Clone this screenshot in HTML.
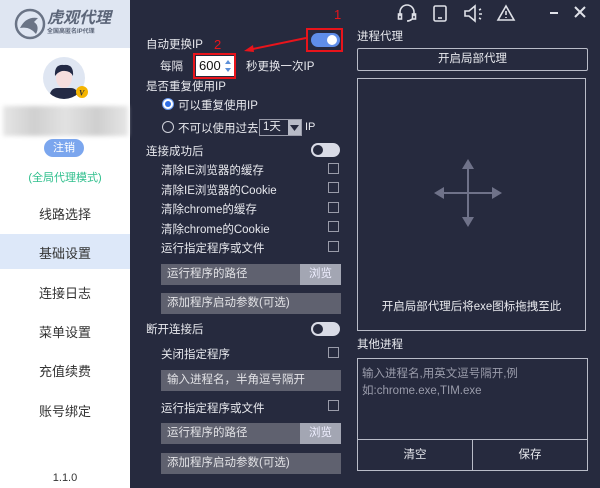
<!DOCTYPE html>
<html><head><meta charset="utf-8"><style>
*{margin:0;padding:0;box-sizing:border-box}
body{width:600px;height:488px;overflow:hidden;background:#262a3e;font-family:"Liberation Sans","Noto Sans CJK SC",sans-serif;font-size:11.5px;color:#e8e9ee;position:relative}
.a{position:absolute;white-space:nowrap}
.side{position:absolute;left:0;top:0;width:130px;height:488px;background:#fff}
.nav{position:absolute;left:0;width:130px;text-align:center;color:#333;font-size:13px}
.cb{position:absolute;left:328px;width:11px;height:11px;border:1px solid #9a9caa}
.bar{position:absolute;left:161px;width:180px;height:21px;background:#5f616f;color:#e2e2e6;padding-left:6px;line-height:21px}
.br{position:absolute;right:0;top:0;width:41px;height:21px;background:#a3a6b3;color:#eef;text-align:center}
.tg{position:absolute;width:29px;height:14px;border-radius:7px;background:#d9dbe6}
.tg i{position:absolute;left:2px;top:2px;width:10px;height:10px;border-radius:50%;background:#262a3e}
.box{position:absolute;border:1px solid #b9bcc8}
.red{position:absolute;border:2px solid #e8141b}
</style></head><body>
<div class="side">
 <div style="position:absolute;left:0;top:0;width:130px;height:48px;background:#dfe6f2"></div>
 <svg class="a" style="left:14px;top:8px" width="32" height="32"><circle cx="16" cy="16" r="14" fill="none" stroke="#6a7486" stroke-width="2.5"/><path d="M6 20 Q12 8 24 10 L20 14 Q26 18 22 26 Q16 18 6 20Z" fill="#6a7486"/></svg>
 <div class="a" style="left:47px;top:9px;font-size:16px;line-height:20px;font-weight:bold;font-style:italic;color:#5c6679">虎观代理</div>
 <div class="a" style="left:47px;top:29px;font-size:6px;line-height:7px;font-weight:bold;color:#5c6679">全国高匿名IP代理</div>
 <svg class="a" style="left:42px;top:56px" width="52" height="50"><defs><clipPath id="c"><circle cx="22" cy="22" r="21"/></clipPath></defs><circle cx="22" cy="22" r="21" fill="#dfe6f2"/><g clip-path="url(#c)"><rect x="8" y="32" width="28" height="14" rx="7" fill="#232a45"/><ellipse cx="22" cy="22" rx="8" ry="10" fill="#f6dede"/><path d="M13 20 Q12 8 22 9 Q32 8 31 20 Q28 14 20 15 Q16 16 13 20Z" fill="#232a45"/></g><circle cx="40" cy="36" r="6" fill="#f4b400"/><text x="37" y="39.5" font-size="8" font-weight="bold" font-style="italic" fill="#333" font-family="Liberation Serif">V</text></svg>
 <div style="position:absolute;left:3px;top:106px;width:125px;height:30px;background:linear-gradient(90deg,#e6e6e6,#d0d0d0,#e2e2e2,#cfcfcf,#e6e6e6);filter:blur(2px)"></div>
 <div class="a" style="left:44px;top:139px;width:40px;height:18px;border-radius:9px;background:#7ba6ee;color:#fff;text-align:center;line-height:18px;font-size:11px">注销</div>
 <div class="a" style="left:0;top:169px;width:130px;text-align:center;color:#2ebf8c;font-size:11px">(全局代理模式)</div>
 <div style="position:absolute;left:0;top:234px;width:130px;height:35px;background:#dde8f9"></div>
 <div class="nav" style="top:204px">线路选择</div>
 <div class="nav" style="top:243px">基础设置</div>
 <div class="nav" style="top:283px">连接日志</div>
 <div class="nav" style="top:322px">菜单设置</div>
 <div class="nav" style="top:361px">充值续费</div>
 <div class="nav" style="top:401px">账号绑定</div>
 <div class="nav" style="top:472px;font-size:11px">1.1.0</div>
</div>
<svg class="a" style="left:395px;top:2px" width="205" height="22" fill="none" stroke="#dfe1e8" stroke-width="1.6">
<path d="M5 14 V10 A7 7 0 0 1 19 10 V14"/><rect x="3.5" y="12" width="3" height="5"/><rect x="17.5" y="12" width="3" height="5"/><path d="M17 17 Q15 19 12 19"/>
<rect x="39" y="4" width="12" height="15" rx="1.5"/><path d="M43 16 H47"/>
<path d="M70 9 H74 L80 4 V19 L74 14 H70Z"/><path d="M84 8 L86 7 M84 12 H87 M84 16 L86 17"/>
<path d="M111 4 L119 18 H103Z"/><path d="M111 9 V13 M111 15 V16"/>
<path d="M155 11 H163" stroke-width="2"/><path d="M180 5 L190 15 M190 5 L180 15" stroke-width="2"/>
</svg>
<div class="a" style="left:146px;top:36px">自动更换IP</div>
<div class="tg" style="left:311px;top:33px;background:#5f8eea"><i style="left:16px;background:#fff"></i></div>
<div class="red" style="left:306px;top:28px;width:37px;height:24px"></div>
<div class="a" style="left:334px;top:7px;color:#e8141b;font-size:13px">1</div>
<div class="a" style="left:214px;top:37px;color:#e8141b;font-size:13px">2</div>
<svg class="a" style="left:240px;top:35px" width="70" height="20"><path d="M66 3 L8 15" stroke="#e8141b" stroke-width="2"/><path d="M4 16 L13 10 L14 17Z" fill="#e8141b"/></svg>
<div class="a" style="left:160px;top:58px">每隔</div>
<div class="a" style="left:196px;top:56px;width:38px;height:20px;background:#fff;color:#111;font-size:13px;line-height:20px;padding-left:3px">600</div>
<svg class="a" style="left:224px;top:58px" width="8" height="16"><path d="M1 6 L4 2 L7 6Z M1 10 L4 14 L7 10Z" fill="#5c8fd8"/></svg>
<div class="red" style="left:193px;top:53px;width:43px;height:26px"></div>
<div class="a" style="left:246px;top:58px">秒更换一次IP</div>
<div class="a" style="left:146px;top:78px">是否重复使用IP</div>
<div class="a" style="left:162px;top:98px;width:12px;height:12px;border-radius:50%;border:1px solid #6a9af0;background:#fff"><div style="margin:2px;width:6px;height:6px;border-radius:50%;background:#2f6fe6"></div></div>
<div class="a" style="left:178px;top:97px">可以重复使用IP</div>
<div class="a" style="left:162px;top:121px;width:12px;height:12px;border-radius:50%;border:1px solid #cfd1da"></div>
<div class="a" style="left:178px;top:120px">不可以使用过去</div>
<div class="a" style="left:259px;top:119px;width:43px;height:17px;border:1px solid #9a9caa;padding-left:3px;line-height:15px">1天<span style="position:absolute;right:0;top:0;width:13px;height:15px;background:#b8bbc7"></span><svg style="position:absolute;right:2px;top:5px" width="9" height="6"><path d="M0 0H9L4.5 6Z" fill="#262a3e"/></svg></div>
<div class="a" style="left:305px;top:121px;font-size:11px">IP</div>
<div class="a" style="left:146px;top:143px">连接成功后</div>
<div class="tg" style="left:311px;top:143px"><i></i></div>
<div class="a" style="left:161px;top:162px">清除IE浏览器的缓存</div><div class="cb" style="top:163px"></div>
<div class="a" style="left:161px;top:182px">清除IE浏览器的Cookie</div><div class="cb" style="top:182px"></div>
<div class="a" style="left:161px;top:201px">清除chrome的缓存</div><div class="cb" style="top:202px"></div>
<div class="a" style="left:161px;top:221px">清除chrome的Cookie</div><div class="cb" style="top:221px"></div>
<div class="a" style="left:161px;top:240px">运行指定程序或文件</div><div class="cb" style="top:241px"></div>
<div class="bar" style="top:264px">运行程序的路径<div class="br">浏览</div></div>
<div class="bar" style="top:293px">添加程序启动参数(可选)</div>
<div class="a" style="left:146px;top:321px">断开连接后</div>
<div class="tg" style="left:311px;top:322px"><i></i></div>
<div class="a" style="left:161px;top:346px">关闭指定程序</div><div class="cb" style="top:347px"></div>
<div class="bar" style="top:370px">输入进程名，半角逗号隔开</div>
<div class="a" style="left:161px;top:400px">运行指定程序或文件</div><div class="cb" style="top:400px"></div>
<div class="bar" style="top:423px">运行程序的路径<div class="br">浏览</div></div>
<div class="bar" style="top:453px">添加程序启动参数(可选)</div>
<div class="a" style="left:357px;top:28px">进程代理</div>
<div class="box" style="left:357px;top:48px;width:231px;height:23px;text-align:center;line-height:21px;border-radius:2px">开启局部代理</div>
<div class="box" style="left:357px;top:78px;width:229px;height:253px"></div>
<svg class="a" style="left:434px;top:159px" width="68" height="68" fill="#6f7289"><path d="M33 8H35V60H33Z M8 33H60V35H8Z"/><path d="M34 0L40 10H28Z M34 68L40 58H28Z M0 34L10 28V40Z M68 34L58 28V40Z"/></svg>
<div class="a" style="left:357px;top:298px;width:229px;text-align:center">开启局部代理后将exe图标拖拽至此</div>
<div class="a" style="left:357px;top:336px">其他进程</div>
<div class="box" style="left:357px;top:358px;width:231px;height:113px"></div>
<div class="a" style="left:362px;top:366px;color:#9a9cab;line-height:17px">输入进程名,用英文逗号隔开,例<br>如:chrome.exe,TIM.exe</div>
<div class="box" style="left:357px;top:439px;width:116px;height:32px;text-align:center;line-height:30px">清空</div>
<div class="box" style="left:472px;top:439px;width:116px;height:32px;text-align:center;line-height:30px">保存</div>
</body></html>
